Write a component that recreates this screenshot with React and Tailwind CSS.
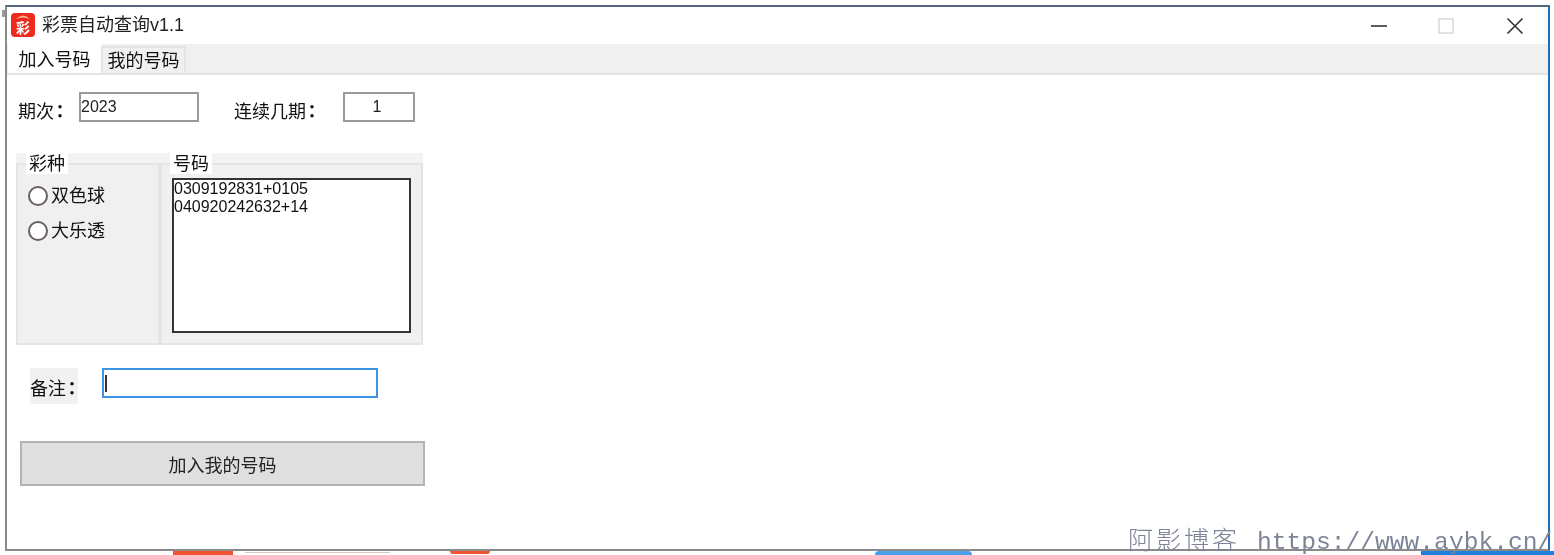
const cjk = "font-['Liberation_Sans','Noto_Sans_CJK_SC',sans-serif]";

function Colon() {
  return <span className="-ml-[3px] font-['Noto_Sans_CJK_TC',sans-serif] font-bold">：</span>;
}

function Radio({ label, className }) {
  return (
    <div className={`flex items-center ${className}`}>
      <span className="w-[20px] h-[20px] rounded-full border-2 border-[#6a5f5f] bg-white shrink-0" />
      <span className="ml-[3px] text-[18px] leading-[20px] whitespace-nowrap text-[#111]">{label}</span>
    </div>
  );
}

function Group({ label, className, labelClass, children }) {
  return (
    <div className={`relative pt-[10px] bg-[#f3f3f3] ${className}`}>
      <span className={`absolute top-0 h-[21px] bg-white text-[18px] leading-[23px] text-center whitespace-nowrap text-[#111] ${labelClass}`}>{label}</span>
      <div className="h-full border-2 border-[#e4e4e4] bg-[#f0f0f0]">{children}</div>
    </div>
  );
}

export default function App() {
  return (
    <div className={`relative w-[1554px] h-[555px] overflow-hidden bg-white pl-[5px] pt-[5px] blur-[0.35px] ${cjk}`}>
      <div className="w-[1545px] h-[546px] border-2 border-[#8a8a8a] border-t-[#55657a] border-r-[#1d6fbe] bg-white flex flex-col">
        <div className="h-[37px] flex items-center shrink-0">
          <svg className="ml-[4px] mb-[2px]" width="24" height="24" viewBox="0 0 24 24">
            <rect x="0" y="0" width="24" height="24" rx="4" fill="#ee2a1e" />
            <path d="M5 6 Q12 -1 19 6 Q12 3 5 6Z" fill="#f7b98a" />
            <text x="12" y="20" textAnchor="middle" fontSize="14" fontWeight="700" fill="#fff" fontFamily="'Noto Sans CJK SC',sans-serif">彩</text>
          </svg>
          <span className="ml-[7px] mb-[2px] text-[18px] leading-[24px] text-[#222]">彩票自动查询v1.1</span>
          <div className="ml-auto flex items-center text-[#222]">
            <svg width="20" height="20" viewBox="0 0 20 20" className="mr-[48px]"><path d="M1 10H17" stroke="#333" strokeWidth="1.6" /></svg>
            <svg width="16" height="16" viewBox="0 0 16 16" className="mr-[52px]"><rect x="1" y="1" width="14" height="14" fill="none" stroke="#d8d8d8" strokeWidth="1.5" /></svg>
            <svg width="18" height="18" viewBox="0 0 18 18" className="mr-[24px]"><path d="M1.5 1.5L16.5 16.5M16.5 1.5L1.5 16.5" stroke="#333" strokeWidth="1.6" /></svg>
          </div>
        </div>

        <div className="h-[31px] shrink-0 bg-[#f0f0f0] border-b-2 border-[#e4e4e4] flex items-end pl-[1px]">
          <div className="w-[93px] h-[31px] bg-white text-[18px] leading-[30px] pt-[3px] text-center text-[#111]">加入号码</div>
          <div className="w-[85px] h-[27px] bg-[#f0f0f0] border-2 border-b-0 border-[#e4e4e4] text-[18px] leading-[26px] text-center text-[#111]">我的号码</div>
        </div>

        <div className="flex-1 flex flex-col pl-[9px]">
          <div className="mt-[17px] flex items-center h-[30px]">
            <span className="ml-[2px] w-[61px] h-[30px] text-[18px] leading-[30px] pt-[3px] whitespace-nowrap text-[#111]">期次<Colon /></span>
            <div className="w-[120px] h-[30px] border-2 border-[#9a9a9a] text-[16px] leading-[26px] text-[#222]">2023</div>
            <span className="ml-[35px] w-[109px] h-[30px] text-[18px] leading-[30px] pt-[3px] whitespace-nowrap text-[#111]">连续几期<Colon /></span>
            <div className="w-[72px] h-[30px] border-2 border-[#9a9a9a] pr-[4px] text-[16px] leading-[26px] text-center text-[#222]">1</div>
          </div>

          <div className="mt-[31px] flex h-[192px]">
            <Group label="彩种" className="w-[144px]" labelClass="left-[10px] w-[42px]">
              <Radio label="双色球" className="ml-[10px] mt-[21px]" />
              <Radio label="大乐透" className="ml-[10px] mt-[15px]" />
            </Group>
            <Group label="号码" className="w-[263px]" labelClass="left-[10px] w-[42px]">
              <div className="ml-[10px] mt-[13px] w-[239px] h-[155px] border-2 border-[#333] bg-white text-[16px] leading-[18px] text-[#111]">
                <div>0309192831+0105</div>
                <div>040920242632+14</div>
              </div>
            </Group>
          </div>

          <div className="mt-[23px] flex items-start h-[36px] pl-[14px]">
            <span className="w-[48px] h-[36px] bg-[#f1f1f1] text-[18px] leading-[36px] pt-[1px] whitespace-nowrap text-[#111]">备注<Colon /></span>
            <div className="ml-[24px] w-[276px] h-[30px] border-2 border-[#3d94e6] bg-white flex items-center pl-[1px]">
              <span className="w-[2px] h-[17px] bg-[#333]" />
            </div>
          </div>

          <div className="mt-[37px] ml-[4px] w-[405px] h-[45px] bg-[#dfdfdf] border-2 border-[#b3b3b3] flex items-center justify-center pt-[6px] text-[18px] text-[#222]">
            加入我的号码
          </div>
        </div>
      </div>

      <span className="absolute left-[2px] top-[10px] w-[3px] h-[7px] bg-[#9a9a9a]" />
      <span className="absolute left-[173px] top-[551px] w-[60px] h-[4px] bg-[#ee5530]" />
      <span className="absolute left-[245px] top-[552px] w-[145px] h-[1px] bg-[#d8c8c0]" />
      <span className="absolute left-[450px] top-[551px] w-[40px] h-[3px] rounded-b-full bg-[#ee5530]" />
      <span className="absolute left-[875px] top-[551px] w-[97px] h-[4px] rounded-t-full bg-[#4a9fea]" />
      <span className="absolute left-[1421px] top-[551px] w-[133px] h-[4px] bg-[#1f7fdc]" />

      <div className="absolute left-[1128px] top-[523px] flex items-baseline whitespace-nowrap text-[#7d8498] text-[25px] leading-[30px]">
        <span className="font-['Noto_Sans_CJK_SC',sans-serif] font-light tracking-[3px]">阿影博客</span>
        <span className="ml-[17px] text-[24.6px] font-['Liberation_Mono',monospace]">https://www.aybk.cn/</span>
      </div>
    </div>
  );
}
